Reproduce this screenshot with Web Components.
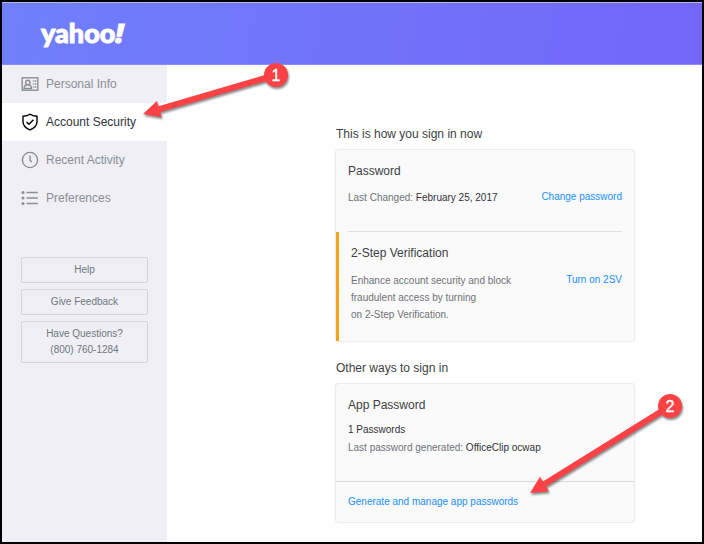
<!DOCTYPE html>
<html lang="en">
<head>
<meta charset="utf-8">
<title>Account Security</title>
<style>
*{box-sizing:border-box}
body{margin:0;min-height:100vh;display:flex;border:2px solid #000;background:#fff;color:#3c3e43;font-family:"Liberation Sans",Arial,sans-serif;font-size:10px;line-height:16px}
account-page{flex:1}
b{font-weight:400;color:#303238}
</style>
</head>
<body>
<account-page>
  <brand-header slot="header"></brand-header>
  <side-nav slot="side">
    <nav-item icon="card">Personal Info</nav-item>
    <nav-item icon="shield" active>Account Security</nav-item>
    <nav-item icon="clock">Recent Activity</nav-item>
    <nav-item icon="list">Preferences</nav-item>
    <help-button slot="help">Help</help-button>
    <help-button slot="help">Give Feedback</help-button>
    <help-button slot="help">Have Questions?<br>(800) 760-1284</help-button>
  </side-nav>
  <card-group heading="This is how you sign in now">
    <setting-row heading="Password" action="Change password">Last Changed: <b>February 25, 2017</b></setting-row>
    <setting-row flagged heading="2-Step Verification" action="Turn on 2SV">Enhance account security and block<br>fraudulent access by turning<br>on 2-Step Verification.</setting-row>
  </card-group>
  <card-group heading="Other ways to sign in">
    <app-password heading="App Password" action="Generate and manage app passwords"><b>1 Passwords</b><br>Last password generated: <b>OfficeClip ocwap</b></app-password>
  </card-group>
  <callout-arrow slot="notes" label="1" style="left:140px;top:60px" width="160" height="65" from="136,15" to="3,54"></callout-arrow>
  <callout-arrow slot="notes" label="2" style="left:520px;top:390px" width="170" height="115" from="150,16" to="10,103"></callout-arrow>
</account-page>
<script>
const define = (name, render) => customElements.define(name, class extends HTMLElement {
  connectedCallback() {
    if (this.shadowRoot) return;
    this.attachShadow({mode: 'open'}).innerHTML = '<style>*{box-sizing:border-box}</style>' + render(this);
  }
});
const attr = (el, name) => el.getAttribute(name) || '';
const icons = {
  card: '<rect x="1.2" y="2.8" width="15.6" height="12.4"/><circle cx="6.8" cy="7.4" r="2.2"/><path d="M3 13.500c.2-2.400 1.500-3.700 3.800-3.700s3.600 1.300 3.800 3.700z"/><path stroke-width="1.500" d="M11.800 6h1m.8 0h1.700m-3.500 3h1m.8 0h1.700m-3.500 3h1m.8 0h1.700"/>',
  shield: '<path stroke-width="1.4" d="M9 1.200c2 1.400 4.300 1.900 7 2.100v5.400c0 3.600-2.700 6.400-7 8.200-4.300-1.800-7-4.600-7-8.200V3.300c2.700-.2 5-.7 7-2.100zM5.600 8.900l2.400 2.400 4.400-4.500"/>',
  clock: '<circle cx="9" cy="9" r="7.600"/><path d="M9 4.500v4.800l1.800 1.800"/>',
  list: '<path stroke-width="1.500" d="M5.500 3.500h11.300M5.500 9h11.300M5.500 14.500h11.300"/><g fill="currentColor" stroke="none"><circle cx="2" cy="3.500" r="1.500"/><circle cx="2" cy="9" r="1.500"/><circle cx="2" cy="14.500" r="1.500"/></g>'
};

define('account-page', () => `<style>
:host{display:flex;flex-direction:column}
.body{flex:1;display:grid;grid-template-columns:165px 1fr}
main{padding:61px 68px 16px 169px;display:flex;flex-direction:column;gap:19px}
</style><slot name="header"></slot><div class="body"><slot name="side"></slot><main><slot></slot></main></div><slot name="notes"></slot>`);

define('brand-header', () => `<style>
:host{display:block;background:linear-gradient(100deg,#6f80fb,#7366f9);border-top:1px solid #b4b5ea;border-bottom:1px solid #8f8cf5;color:#fff}
header{height:61px;padding:0 39px 2px;display:flex;align-items:center}
a{color:inherit;text-decoration:none;font:900 27px/32px Lato,sans-serif;-webkit-text-stroke:1px #fff}
i{font:italic 800 27px/32px "Open Sans",sans-serif}
</style><header><a href="#" aria-label="yahoo!">yahoo<i>!</i></a></header>`);

define('side-nav', () => `<style>
:host{display:block;background:#f0eff5}
nav{display:flex;flex-direction:column}
.help{display:grid;gap:6px;padding:40px 19px}
</style><nav><slot></slot></nav><div class="help"><slot name="help"></slot></div>`);

define('nav-item', el => `<style>
:host{display:block;color:#8b8e95;font-size:12px}
:host([active]){background:#fff;color:#303238}
a{display:flex;align-items:center;gap:7px;height:38px;padding-left:19px;color:inherit;text-decoration:none}
svg{width:18px;height:18px;fill:none;stroke:currentColor;stroke-width:1.4}
:host([active]) svg{color:#000}
</style><a href="#"><svg viewBox="0 0 18 18" aria-hidden="true">${icons[attr(el, 'icon')]}</svg><slot></slot></a>`);

define('help-button', () => `<style>
:host{display:block}
button{display:block;width:100%;padding:4px;border:1px solid #d5d6dc;border-radius:2px;background:none;color:#6e7780;font:inherit}
</style><button type="button"><slot></slot></button>`);

define('card-group', el => `<style>
h2{margin:0 0 8px;font-size:12px;font-weight:400;line-height:16px}
.card{background:#fafafa;border-radius:2px;box-shadow:0 0 2px #0004}
</style><section><h2>${attr(el, 'heading')}</h2><div class="card"><slot></slot></div></section>`);

define('setting-row', el => `<style>
:host{display:block}
.row{display:grid;grid-template-columns:1fr auto;align-items:start;padding:13px 12px 26px;color:#707279}
:host([flagged]) .row{border-left:3px solid #f8a51b;padding-bottom:18px}
h3{grid-column:1/-1;margin:0 0 10px;font-size:12px;font-weight:400;line-height:16px;color:#3c3e43}
:host([flagged]) h3{margin-bottom:11px}
p{margin:0;line-height:17px}
a{color:#188fff;text-decoration:none}
hr{margin:-1px 12px 0;border:0;border-top:1px solid #dedfe2}
:host([flagged]) hr{display:none}
</style><div class="row"><h3>${attr(el, 'heading')}</h3><p><slot></slot></p><a href="#">${attr(el, 'action')}</a></div><hr>`);

define('app-password', el => `<style>
:host{display:block}
.info{padding:13px 12px 24px;color:#707279}
h3{margin:0 0 8px;font-size:12px;font-weight:400;line-height:16px;color:#3c3e43}
p{margin:0;line-height:18px}
a{display:block;padding:12px;border-top:1px solid #d8dade;color:#188fff;text-decoration:none}
</style><div class="info"><h3>${attr(el, 'heading')}</h3><p><slot></slot></p></div><a href="#">${attr(el, 'action')}</a>`);

define('callout-arrow', el => {
  const [x, y] = attr(el, 'from').split(',').map(Number);
  const [tx, ty] = attr(el, 'to').split(',').map(Number);
  const length = Math.hypot(tx - x, ty - y);
  const angle = Math.atan2(ty - y, tx - x) * 180 / Math.PI;
  return `<style>
:host{position:absolute;pointer-events:none}
svg{display:block;overflow:visible;filter:drop-shadow(1px 2px 1px #0007)}
text{font-size:16px;fill:#fff;stroke:#fff;stroke-width:.4}
</style><svg width="${attr(el, 'width')}" height="${attr(el, 'height')}" fill="#fd4246"><path transform="translate(${x} ${y}) rotate(${angle})" d="M0-3H${length - 17}V-8.500L${length} 0 ${length - 17} 8.500V3H0z"/><circle cx="${x}" cy="${y}" r="12"/><text x="${x}" y="${y + 6}" text-anchor="middle">${attr(el, 'label')}</text></svg>`;
});
</script>
</body>
</html>
